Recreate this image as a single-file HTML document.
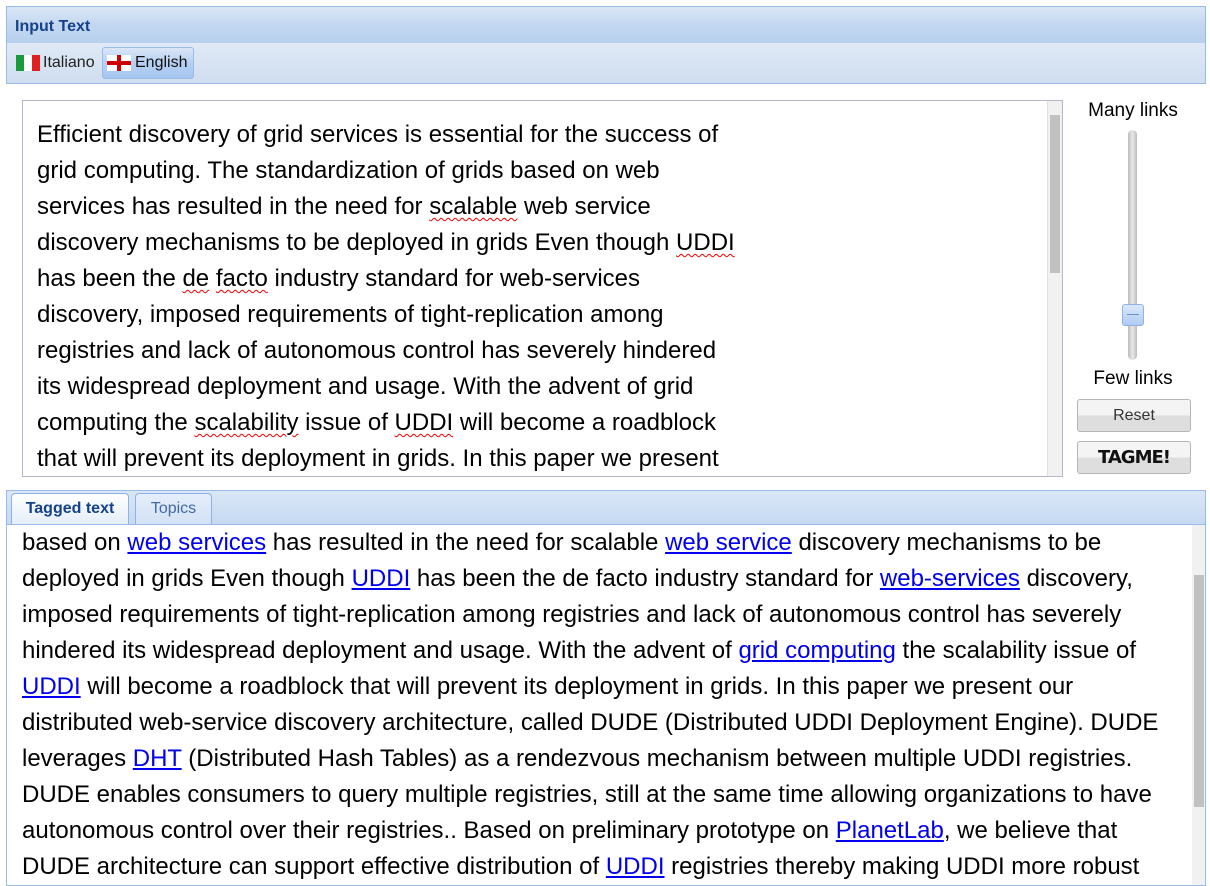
<!DOCTYPE html>
<html><head><meta charset="utf-8"><style>
body{margin:0;width:1210px;height:884px;background:#fff;font-family:"Liberation Sans",sans-serif;position:relative;overflow:hidden}
.abs{position:absolute}
.hdr{left:6px;top:6px;width:1198px;height:36px;border:1px solid #99bbe8;background:linear-gradient(#dae7f6,#c3d7f0 50%,#b8d0ee);}
.hdr span{position:absolute;left:8px;top:11px;font-weight:bold;font-size:16px;color:#15428b}
.tb{left:6px;top:43px;width:1198px;height:40px;border:1px solid #99bbe8;border-top:none;background:linear-gradient(#dfe9f6,#d0def0)}
.ta{left:22px;top:100px;width:1039px;height:375px;border:1px solid #b5b8c8;background:#fff;overflow:hidden}
.ta p{margin:0;position:absolute;left:14px;top:16px;font-size:24px;line-height:36px;color:#000;white-space:nowrap}
.sp{text-decoration:underline wavy #e00;text-decoration-thickness:1px;text-underline-offset:3px}
.sb{background:#f1f1f1}
.btn{left:1077px;width:112px;height:31px;border:1px solid #b5b5b5;border-radius:3px;background:linear-gradient(#f4f4f4 50%,#dedede 50%);text-align:center;font-size:16px;color:#333;line-height:31px}
.tab{top:493px;height:31px;border:1px solid #8db2e3;border-bottom:none;border-radius:4px 4px 0 0;font-size:16px;text-align:center;line-height:30px}
.out{left:6px;top:524px;width:1198px;height:360px;border:1px solid #99bbe8;background:#fff;overflow:hidden}
.out p{margin:0;position:absolute;left:15px;top:0;font-size:24px;line-height:36px;color:#000;white-space:nowrap}
a{color:#0000ee;text-decoration:underline}
</style></head><body>
<div class="abs hdr"><span>Input Text</span></div>
<div class="abs tb">
 <div class="abs" style="left:9px;top:12px;width:24px;height:16px;background:linear-gradient(90deg,#1a9a3a 33%,#fff 33% 66%,#e02020 66%)"></div>
 <div class="abs" style="left:36px;top:11px;font-size:16px;color:#222">Italiano</div>
 <div class="abs" style="left:95px;top:4px;width:90px;height:30px;border:1px solid #99bbe8;border-radius:3px;background:linear-gradient(#dbe7f7,#b6d0f2 50%,#a6c6f0)"></div>
 <div class="abs" style="left:100px;top:12px;width:24px;height:16px;background:#fff;"><div class="abs" style="left:10px;top:0;width:4px;height:16px;background:#c00"></div><div class="abs" style="left:0;top:6px;width:24px;height:4px;background:#c00"></div></div>
 <div class="abs" style="left:128px;top:11px;font-size:16px;color:#111">English</div>
</div>
<div class="abs ta">
<p>Efficient discovery of grid services is essential for the success of<br>grid computing. The standardization of grids based on web<br>services has resulted in the need for <span class="sp">scalable</span> web service<br>discovery mechanisms to be deployed in grids Even though <span class="sp">UDDI</span><br>has been the <span class="sp">de</span> <span class="sp">facto</span> industry standard for web-services<br>discovery, imposed requirements of tight-replication among<br>registries and lack of autonomous control has severely hindered<br>its widespread deployment and usage. With the advent of grid<br>computing the <span class="sp">scalability</span> issue of <span class="sp">UDDI</span> will become a roadblock<br>that will prevent its deployment in grids. In this paper we present</p>
<div class="abs sb" style="left:1024px;top:0;width:15px;height:375px;border-left:1px solid #e0e0e0"></div>
<div class="abs" style="left:1027px;top:14px;width:10px;height:158px;background:#c1c1c1"></div>
</div>
<div class="abs" style="left:1076px;top:100px;width:114px;text-align:center;font-size:19px">Many links</div>
<div class="abs" style="left:1128px;top:130px;width:9px;height:230px;border-radius:5px;background:linear-gradient(90deg,#bbb,#e8e8e8,#bbb)"></div>
<div class="abs" style="left:1122px;top:304px;width:20px;height:20px;border:1px solid #8fb3e6;border-radius:3px;background:linear-gradient(#dbe8fb,#afcbf5)"><div class="abs" style="left:4px;top:9px;width:12px;height:1px;background:#6a8fcc"></div></div>
<div class="abs" style="left:1076px;top:368px;width:114px;text-align:center;font-size:19px">Few links</div>
<div class="abs btn" style="top:399px">Reset</div>
<div class="abs btn" style="top:441px;font-weight:bold;font-size:18px;color:#111;letter-spacing:-1px;font-family:'DejaVu Sans',sans-serif">TAGME!</div>
<div class="abs" style="left:6px;top:490px;width:1198px;height:34px;border:1px solid #99bbe8;border-bottom:none;background:linear-gradient(#dae7f6,#c5d9f2)"></div>
<div class="abs tab" style="left:11px;width:116px;background:linear-gradient(#fff,#e3edf9);font-weight:bold;color:#15428b">Tagged text</div>
<div class="abs tab" style="left:135px;width:75px;background:linear-gradient(#e5eefa,#d2e1f5);color:#416aa3">Topics</div>
<div class="abs out">
<p>based on <a>web services</a> has resulted in the need for scalable <a>web service</a> discovery mechanisms to be<br>deployed in grids Even though <a>UDDI</a> has been the de facto industry standard for <a>web-services</a> discovery,<br>imposed requirements of tight-replication among registries and lack of autonomous control has severely<br>hindered its widespread deployment and usage. With the advent of <a>grid computing</a> the scalability issue of<br><a>UDDI</a> will become a roadblock that will prevent its deployment in grids. In this paper we present our<br>distributed web-service discovery architecture, called DUDE (Distributed UDDI Deployment Engine). DUDE<br>leverages <a>DHT</a> (Distributed Hash Tables) as a rendezvous mechanism between multiple UDDI registries.<br>DUDE enables consumers to query multiple registries, still at the same time allowing organizations to have<br>autonomous control over their registries.. Based on preliminary prototype on <a>PlanetLab</a>, we believe that<br>DUDE architecture can support effective distribution of <a>UDDI</a> registries thereby making UDDI more robust</p>
<div class="abs sb" style="left:1185px;top:0;width:13px;height:360px"></div>
<div class="abs" style="left:1187px;top:50px;width:10px;height:232px;background:#c1c1c1"></div>
</div>
</body></html>
